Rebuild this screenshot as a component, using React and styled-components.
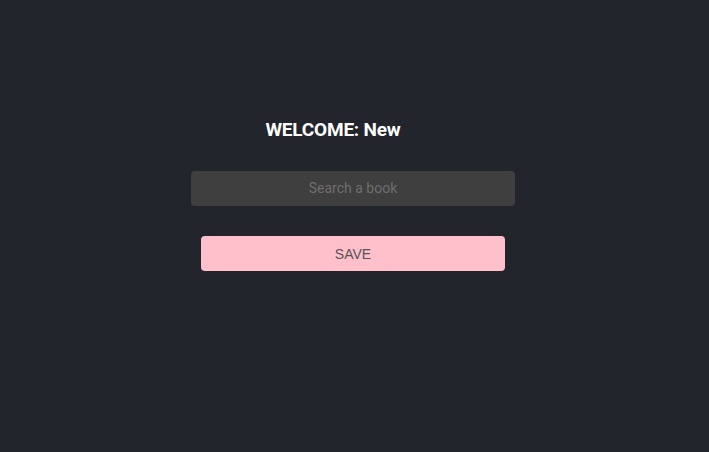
import React, { useState } from "react";
import styled, { createGlobalStyle } from "styled-components";

const GlobalStyle = createGlobalStyle`
  html, body {
    margin: 0;
    padding: 0;
    background-color: #22252c;
    font-family: Roboto, "Liberation Sans", sans-serif;
  }
`;

const Page = styled.div`
  min-height: 452px;
  display: flex;
  flex-direction: column;
  align-items: center;
  padding: 117px 3px 0 0;
  box-sizing: border-box;
`;

const Title = styled.h2`
  margin: 0 40px 0 0;
  font-size: 19px;
  font-weight: 700;
  color: #ffffff;
  line-height: 25px;
  letter-spacing: -0.2px;
`;

const SearchInput = styled.input`
  margin-top: 29px;
  width: 324px;
  height: 35px;
  box-sizing: border-box;
  border: none;
  border-radius: 4px;
  background-color: #3f3f3f;
  color: #ddd;
  text-align: center;
  font-family: Roboto, sans-serif;
  font-size: 14px;
  padding: 0 0 1px;
  outline: none;
  &::placeholder {
    color: #6e6e6e;
  }
`;

const SaveButton = styled.button`
  margin-top: 30px;
  width: 304px;
  height: 35px;
  border: none;
  border-radius: 4px;
  background-color: #ffc0cb;
  color: #555;
  font-family: "Liberation Sans", Arial, sans-serif;
  font-size: 14px;
  cursor: pointer;
`;

export default function App() {
  const [book, setBook] = useState("");

  return (
    <>
      <GlobalStyle />
      <Page>
        <Title>WELCOME: New</Title>
        <SearchInput
          placeholder="Search a book"
          value={book}
          onChange={(e) => setBook(e.target.value)}
        />
        <SaveButton>SAVE</SaveButton>
      </Page>
    </>
  );
}
